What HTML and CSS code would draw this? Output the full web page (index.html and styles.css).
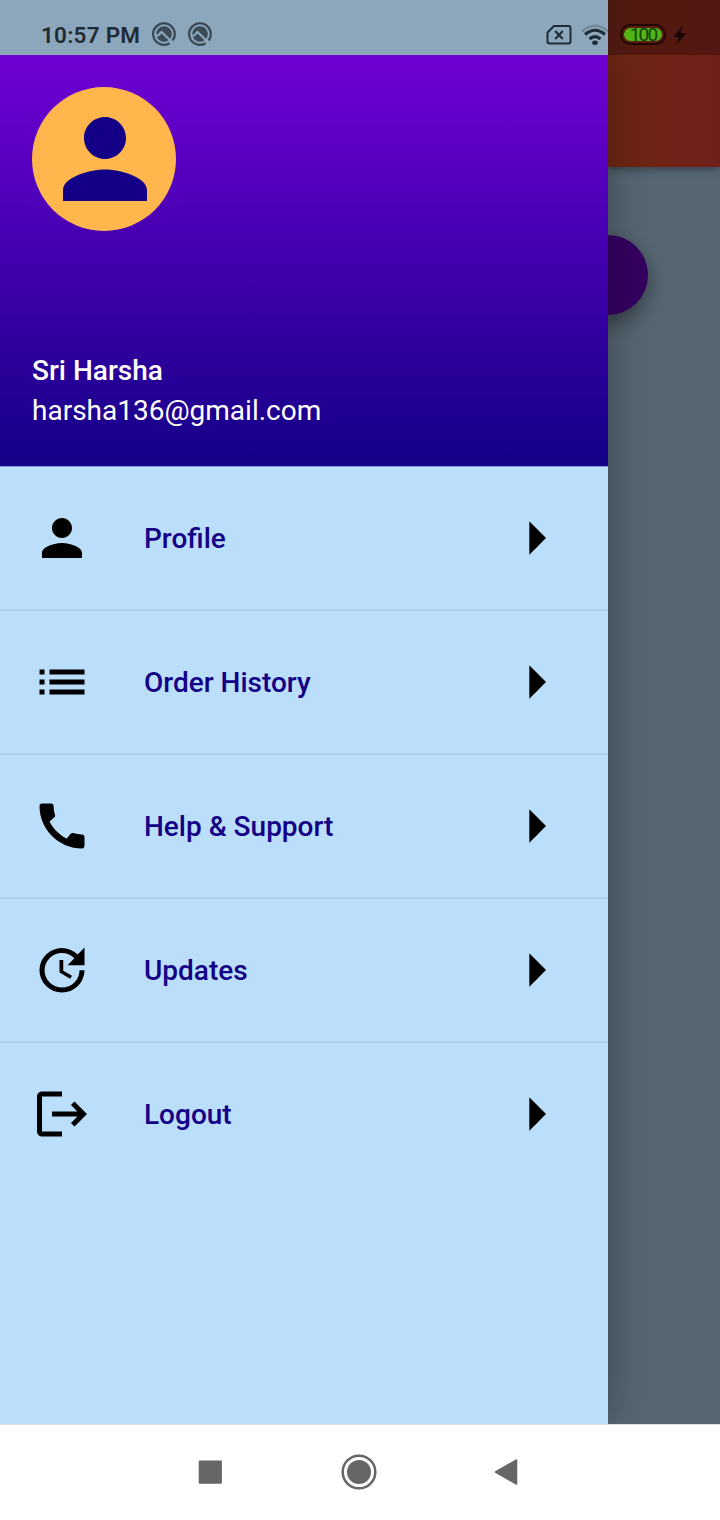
FILE: index.html
```html
<!DOCTYPE html>
<html lang="en">
<head>
<meta charset="utf-8">
<title>Menu</title>
<link rel="stylesheet" href="styles.css">
</head>
<body>
<div class="phone">
  <header class="status">
    <span class="time">10:57 PM</span>
    <svg class="notif" width="24" height="24" viewBox="0 0 24 24"><use href="#notif"/></svg>
    <svg class="notif notif-second" width="24" height="24" viewBox="0 0 24 24"><use href="#notif"/></svg>
    <div class="status-right">
      <svg width="26" height="22" viewBox="0 0 26 22" fill="none" stroke="#1f2c35" stroke-width="2"><path d="M8 2h14.500q2 0 2 2v13.500q0 2-2 2h-19q-2 0-2-2V8.500z" stroke-linejoin="round"/><path d="M9.200 7l7.600 8M16.800 7l-7.600 8"/></svg>
      <svg class="wifi" width="27" height="22" viewBox="0 0 27 22" fill="none" stroke="#1f2c35" stroke-width="3"><path d="M1 7.500Q14-4 27 7.500" stroke="#718898" stroke-width="2.400"/><path d="M4 10.500Q14 2 24 10.500M8.500 15q5.500-4.800 11 0"/><ellipse cx="14" cy="18.800" rx="2.800" ry="2.200" fill="#1f2c35" stroke="none"/></svg>
      <span class="battery"><span class="charge">100</span></span>
      <svg class="bolt" width="14" height="20" viewBox="0 0 14 20"><path d="M9.700.5L.5 12h5.200L3.500 19.500 13 8.200H7.500z" fill="#190504"/></svg>
    </div>
  </header>
  <main class="app">
    <aside class="drawer">
      <section class="account">
        <div class="avatar"><svg width="126" height="126" viewBox="0 0 24 24" fill="#140087"><use href="#person"/></svg></div>
        <div class="identity">
          <div class="name">Sri Harsha</div>
          <div class="email">harsha136@gmail.com</div>
        </div>
      </section>
      <nav class="menu">
        <a class="item"><svg class="icon" viewBox="0 0 24 24"><use href="#person"/></svg><span class="label">Profile</span><svg class="arrow" viewBox="0 0 24 24"><use href="#arrow"/></svg></a>
        <a class="item"><svg class="icon" viewBox="0 0 24 24"><path d="M3 13h2v-2H3v2zm0 4h2v-2H3v2zm0-8h2V7H3v2zm4 4h14v-2H7v2zm0 4h14v-2H7v2zM7 7v2h14V7H7z"/></svg><span class="label">Order History</span><svg class="arrow" viewBox="0 0 24 24"><use href="#arrow"/></svg></a>
        <a class="item"><svg class="icon" viewBox="0 0 24 24"><path d="M20.010 15.380c-1.230 0-2.420-.2-3.530-.56-.35-.12-.74-.03-1.010.24l-1.570 1.970c-2.830-1.350-5.480-3.900-6.890-6.830l1.950-1.660c.27-.28.35-.67.24-1.020-.37-1.110-.56-2.300-.56-3.530 0-.54-.45-.99-.99-.99H4.190C3.650 3 3 3.240 3 3.990 3 13.280 10.730 21 20.010 21c.71 0 .99-.63.99-1.180v-3.450c0-.54-.45-.99-.99-.99z"/></svg><span class="label">Help &amp; Support</span><svg class="arrow" viewBox="0 0 24 24"><use href="#arrow"/></svg></a>
        <a class="item"><svg class="icon" viewBox="0 0 24 24"><path d="M21 10.120h-6.780l2.740-2.820c-2.730-2.700-7.150-2.800-9.880-.1-2.730 2.710-2.730 7.080 0 9.790s7.150 2.710 9.880 0C18.320 15.650 19 14.080 19 12.100h2c0 1.980-.88 4.550-2.640 6.290-3.510 3.480-9.210 3.480-12.720 0-3.500-3.470-3.530-9.110-.02-12.580s9.140-3.470 12.650 0L21 3v7.120zM12.500 8v4.250l3.500 2.080-.72 1.210L11 13V8h1.500z"/></svg><span class="label">Updates</span><svg class="arrow" viewBox="0 0 24 24"><use href="#arrow"/></svg></a>
        <a class="item"><svg class="icon" viewBox="0 0 24 24"><path d="M17 7l-1.410 1.410L18.170 11H8v2h10.170l-2.580 2.580L17 17l5-5zM4 5h8V3H4c-1.100 0-2 .9-2 2v14c0 1.100.9 2 2 2h8v-2H4V5z"/></svg><span class="label">Logout</span><svg class="arrow" viewBox="0 0 24 24"><use href="#arrow"/></svg></a>
      </nav>
    </aside>
    <div class="page">
      <div class="appbar"></div>
      <div class="pill"></div>
    </div>
  </main>
  <footer class="navbar">
    <svg width="24" height="24" viewBox="0 0 24 24"><rect x=".7" y=".5" width="23.200" height="23.200" rx="1" fill="#666"/></svg>
    <svg class="home" width="36" height="36" viewBox="0 0 36 36"><circle cx="18" cy="18" r="16.300" fill="none" stroke="#666" stroke-width="2.500"/><circle cx="18" cy="18" r="12" fill="#666"/></svg>
    <svg width="24" height="28" viewBox="0 0 24 28"><path d="M1.500 14L22.500 2v24z" fill="#666" stroke="#666" stroke-width="1.500" stroke-linejoin="round"/></svg>
  </footer>
</div>
<svg class="symbols" width="0" height="0">
  <symbol id="person" viewBox="0 0 24 24"><path d="M12 12c2.210 0 4-1.790 4-4s-1.790-4-4-4-4 1.790-4 4 1.790 4 4 4zm0 2c-2.670 0-8 1.340-8 4v2h16v-2c0-2.660-5.330-4-8-4z"/></symbol>
  <symbol id="arrow" viewBox="0 0 24 24"><path d="M10 17l5-5-5-5z"/></symbol>
  <symbol id="notif" viewBox="0 0 24 24"><path d="M17.500 21.300A10.800 10.800 0 1 1 20.600 18.500" fill="none" stroke="#3a4a56" stroke-width="2.300"/><circle cx="12" cy="12" r="7.800" fill="#3a4a56"/><path d="M3 14l3-.5 3.500-3.500 11 10.500" fill="none" stroke="#8ca6bc" stroke-width="2.300"/></symbol>
</svg>
</body>
</html>
```
FILE: styles.css
```css
* { box-sizing: border-box; }
body { margin: 0; font-family: Roboto, "Liberation Sans", sans-serif; }
.phone { position: relative; display: flex; flex-direction: column; width: 720px; height: 1520px; overflow: hidden; background: #fff; }
.symbols { position: absolute; }

.status { display: flex; align-items: center; height: 55px; padding: 14px 33px 0 41px; background: linear-gradient(90deg, #8ca6bc 608px, #4a1912 608px, #53190f 640px, #531812 720px); }
.time { width: 111px; font-size: 22.500px; font-weight: 600; line-height: 28px; letter-spacing: .25px; color: #1f2c35; white-space: nowrap; }
.notif { margin-top: -2px; }
.notif-second { margin-left: 12px; }
.status-right { display: flex; align-items: center; margin-left: auto; }
.wifi { margin: 1px 0 0 9px; }
.battery { display: block; width: 46px; height: 21px; margin-left: 12px; padding: 2px; border: 2px solid #210504; border-radius: 11px; background: #5c1d12; }
.charge { display: block; height: 13px; border-radius: 7px; background: #50b414; color: #17400b; font-size: 19px; font-weight: 400; line-height: 14px; text-align: center; letter-spacing: -1.800px; }
.bolt { margin-left: 7px; }

.app { display: grid; grid-template-columns: 608px 112px; height: 1369px; }
.drawer { z-index: 1; background: #bbdefb; box-shadow: 0 0 40px rgba(0, 0, 0, .32); clip-path: inset(0 -80px 0 0); }
.account { display: flex; flex-direction: column; justify-content: space-between; height: 412px; padding: 32px 32px 35px; background: linear-gradient(#7000d4, #140087); border-bottom: 1px solid #8496dc; }
.avatar { display: flex; align-items: center; width: 144px; height: 144px; padding-left: 10px; border-radius: 50%; background: #ffb74d; }
.avatar svg { flex: none; }
.identity { color: #fff; font-size: 28px; line-height: 40px; }
.name { font-weight: 500; }
.item { display: flex; align-items: center; height: 144px; padding: 0 32px; border-bottom: 2px solid #aed1ed; }
.item:last-child { border-bottom-color: transparent; }
.icon { width: 60px; height: 60px; }
.label { flex: 1; padding: 2px 0 0 52px; font-size: 28px; font-weight: 500; line-height: 40px; color: #140087; }
.arrow { width: 80px; height: 80px; }

.page { display: flex; flex-direction: column; overflow: hidden; background: #566773; }
.appbar { height: 112px; flex: none; background: linear-gradient(90deg, #6f2714, #721f1b); box-shadow: 0 2px 8px rgba(0, 0, 0, .4); }
.pill { width: 80px; height: 80px; flex: none; margin: 68px 0 0 -40px; border-radius: 50%; background: #350061; box-shadow: 0 8px 22px rgba(0, 0, 0, .42); }

.navbar { display: flex; justify-content: space-between; align-items: center; height: 96px; padding: 0 202px 1px 198px; border-top: 1px solid #dde2e6; background: #fff; }
.home { margin-left: 2px; }
```
